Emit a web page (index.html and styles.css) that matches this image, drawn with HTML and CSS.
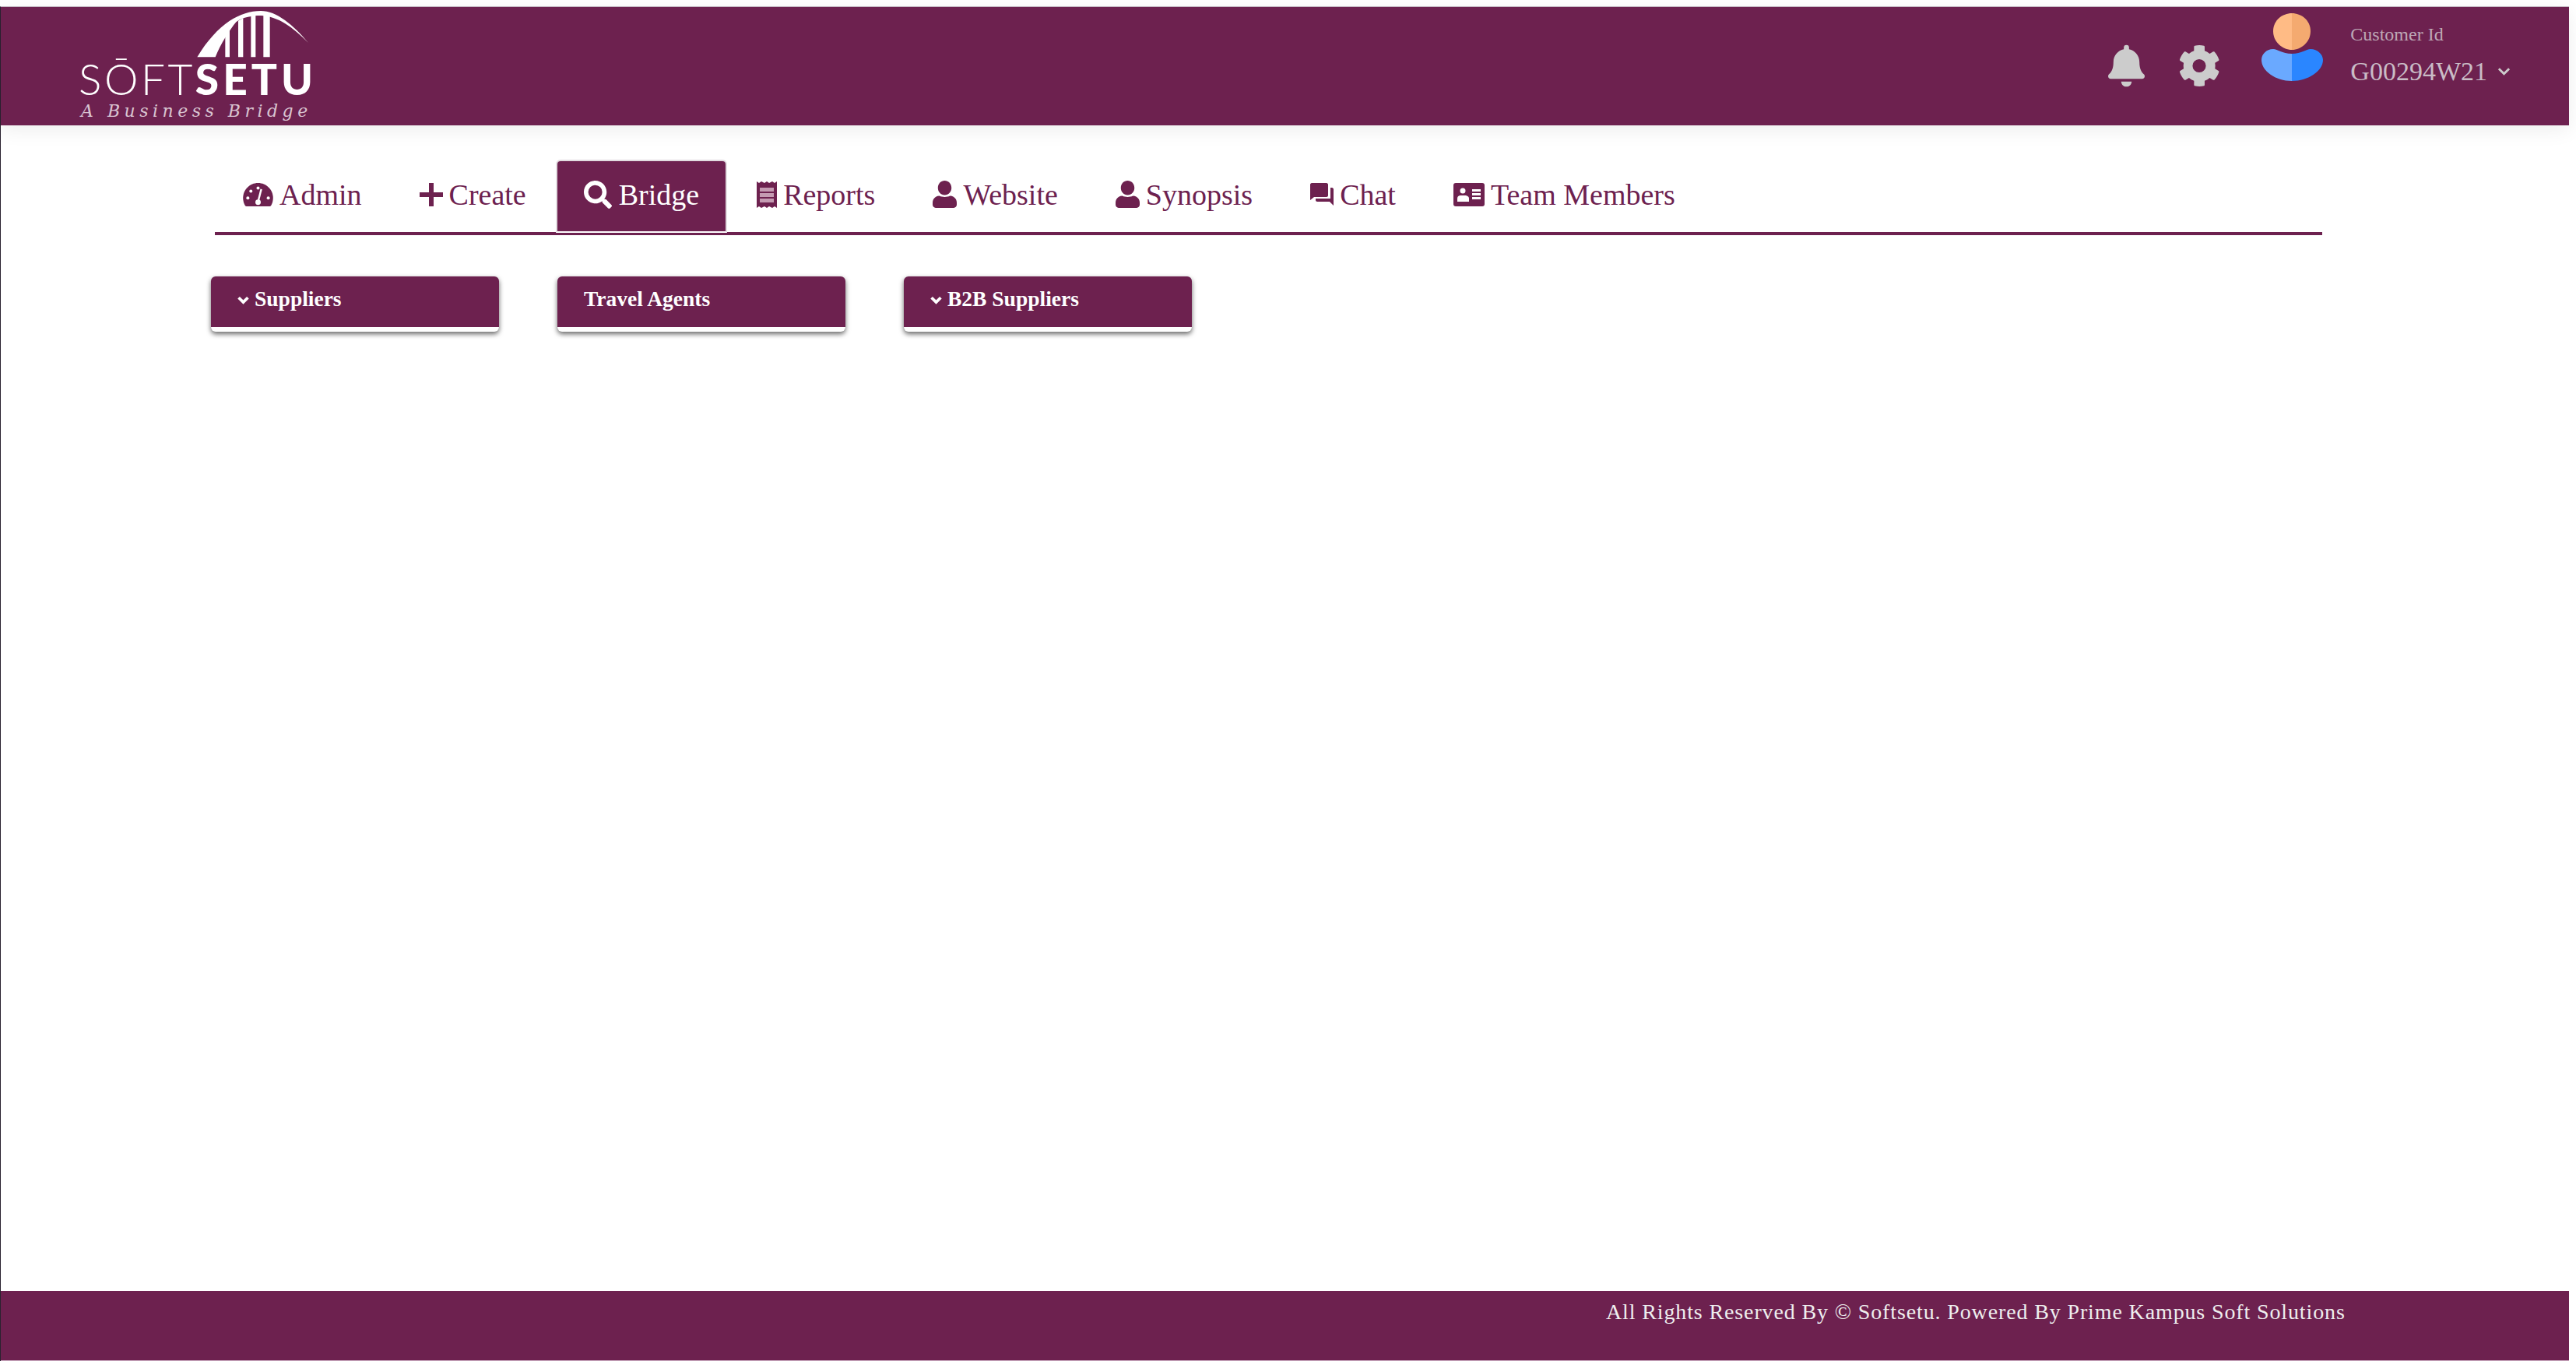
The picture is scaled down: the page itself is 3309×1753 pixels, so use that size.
FILE: index.html
```html
<!DOCTYPE html>
<html lang="en">
<head>
    <meta charset="UTF-8">
    <meta name="viewport" content="width=device-width, initial-scale=1.0">
    <title>Softsetu - Bridge</title>
    <link rel="stylesheet" href="styles.css">
</head>
<body>
    <div class="page">
        <header class="topbar">
            <div class="logo">
                <svg class="logo-arc" viewBox="0 0 510 210">
                    <path fill="#fff" d="M40 190 C75 130 120 80 165 50 C205 25 245 12 285 12 C345 12 410 65 468 135 C410 75 350 32 285 30 C255 30 215 35 190 55 C165 85 130 140 110 190 Z"/>
                    <path fill="#fff" d="M148 190 H165 V75 L148 95 Z M198 190 H217 V40 L198 50 Z M247 190 H265 V30 H247 Z M295 190 H320 V25 H295 Z"/>
                </svg>
                <div class="logo-name"><span class="logo-thin">SŌFT</span><span class="logo-bold">SETU</span></div>
                <div class="logo-tag">A Business Bridge</div>
            </div>
            <div class="top-right">
                <svg class="top-icon bell" viewBox="0 0 448 512"><path fill="#ccc" d="M224 512c35 0 64-29 64-64H160c0 35 29 64 64 64zm215-150c-19-21-56-52-56-154 0-78-54-140-127-155V32a32 32 0 0 0-64 0v21C119 68 65 130 65 208c0 102-37 133-56 154-6 6-9 14-9 22 0 16 13 32 32 32h384c19 0 32-16 32-32 0-8-3-16-9-22z"/></svg>
                <svg class="top-icon gear" viewBox="0 0 512 512"><path fill="#ccc" fill-rule="evenodd" d="M487 316l-42-25c4-23 4-47 0-70l42-25c5-3 7-9 5-14-11-35-30-67-54-93-4-4-10-5-15-2l-42 24c-18-15-38-27-60-35V28c0-6-4-11-9-12-36-8-74-8-109 0-5 1-9 6-9 12v48c-22 8-42 20-60 35L92 87c-5-3-11-2-15 2-24 26-43 58-54 93-2 5 0 11 5 14l42 25c-4 23-4 47 0 70l-42 25c-5 3-7 9-5 14 11 35 30 67 54 93 4 4 10 5 15 2l42-24c18 15 38 27 60 35v48c0 6 4 11 9 12 36 8 74 8 109 0 5-1 9-6 9-12v-48c22-8 42-20 60-35l42 24c5 3 11 2 15-2 24-26 43-58 54-93 2-5 0-11-5-14zM256 336a80 80 0 1 1 0-160 80 80 0 0 1 0 160z"/></svg>
                <svg class="avatar" viewBox="0 0 80 87">
                    <path d="M39 0 C27 0 15 9 15 23 C15 37 27 47 39 47 Z" fill="#ffbb85"/>
                    <path d="M39 0 C51 0 63 9 63 23 C63 37 51 47 39 47 Z" fill="#f4aa70"/>
                    <path d="M39 87 C18 87 0 74 0 60 C0 53 6 46 15 46 C21 46 26 52 39 52 Z" fill="#6aa9ff"/>
                    <path d="M39 87 C60 87 79 74 79 60 C79 53 72 46 63 46 C57 46 52 52 39 52 Z" fill="#2a86ff"/>
                </svg>
                <div class="customer">
                    <div class="customer-label">Customer Id</div>
                    <div class="customer-id">G00294W21
                        <svg class="customer-caret" viewBox="0 0 18 12"><path d="M2 2 L9 9 L16 2" fill="none" stroke="#ccc" stroke-width="3"/></svg>
                    </div>
                </div>
            </div>
        </header>

        <main class="content">
            <nav class="tabs">
                <a class="tab" href="#">
                    <svg class="tab-icon gauge" viewBox="0 32 576 448">
                        <path fill="currentColor" d="M288 32C129 32 0 161 0 320c0 53 14 103 39 146 6 9 16 14 27 14h444c11 0 21-5 27-14 25-43 39-93 39-146 0-159-129-288-288-288z"/>
                        <g fill="#fff"><circle cx="288" cy="128" r="30"/><circle cx="150" cy="190" r="30"/><circle cx="92" cy="320" r="30"/><circle cx="484" cy="320" r="30"/><circle cx="288" cy="400" r="52"/></g>
                        <path d="M350 150 L288 390" stroke="#fff" stroke-width="36"/>
                    </svg>
                    Admin
                </a>
                <a class="tab" href="#">
                    <svg class="tab-icon plus" viewBox="0 0 30 30"><path fill="currentColor" d="M12 0h6v12h12v6H18v12h-6V18H0v-6h12z"/></svg>
                    Create
                </a>
                <a class="tab active" href="#">
                    <svg class="tab-icon search" viewBox="0 0 512 512"><path fill="currentColor" fill-rule="evenodd" d="M505 443L405 343c-4-4-10-7-17-7h-16c28-35 44-80 44-128C416 93 323 0 208 0S0 93 0 208s93 208 208 208c48 0 93-16 128-44v16c0 7 3 13 7 17l100 100c9 9 24 9 34 0l28-28c9-10 9-25 0-34zM208 336a128 128 0 1 1 0-256 128 128 0 0 1 0 256z"/></svg>
                    Bridge
                </a>
                <a class="tab" href="#">
                    <svg class="tab-icon receipt" viewBox="0 0 26 34"><path fill="currentColor" d="M0 0l3 2 3-2 4 2 3-2 3 2 4-2 3 2 3-2v34l-3-2-3 2-4-2-3 2-3-2-4 2-3-2-3 2z"/><path fill="#c49bb2" d="M4 8h18v5H4zM4 15h18v5H4zM4 22h18v5H4z"/></svg>
                    Reports
                </a>
                <a class="tab" href="#">
                    <svg class="tab-icon person" viewBox="0 0 32 36"><path fill="currentColor" d="M16 0c5 0 9 4 9 9.500S21 19 16 19 7 15 7 9.500 11 0 16 0zM9 20c4 2 10 2 14 0 5 0 9 4 9 9v3c0 2-2 4-4 4H4c-2 0-4-2-4-4v-3c0-5 4-9 9-9z"/></svg>
                    Website
                </a>
                <a class="tab" href="#">
                    <svg class="tab-icon person" viewBox="0 0 32 36"><path fill="currentColor" d="M16 0c5 0 9 4 9 9.500S21 19 16 19 7 15 7 9.500 11 0 16 0zM9 20c4 2 10 2 14 0 5 0 9 4 9 9v3c0 2-2 4-4 4H4c-2 0-4-2-4-4v-3c0-5 4-9 9-9z"/></svg>
                    Synopsis
                </a>
                <a class="tab" href="#">
                    <svg class="tab-icon chat" viewBox="0 0 30 29"><path fill="currentColor" d="M2 0h19c1 0 2 1 2 2v14c0 1-1 2-2 2H5l-5 4V2C0 1 1 0 2 0z"/><path fill="currentColor" d="M26 6h2c1 0 2 1 2 2v21l-5-5H9c-1 0-2-1-2-2v-2h19z"/></svg>
                    Chat
                </a>
                <a class="tab" href="#">
                    <svg class="tab-icon idcard" viewBox="0 0 40 30"><rect width="40" height="30" rx="3" fill="currentColor"/><circle cx="12" cy="10" r="3.500" fill="#fff"/><path fill="#fff" d="M5 24v-4c0-3 2-4 4-4h6c2 0 5 1 5 4v4z"/><path fill="#fff" d="M24 8h11v3H24zM24 13h11v3H24zM24 18h11v3H24z"/></svg>
                    Team Members
                </a>
            </nav>

            <div class="cards">
                <div class="card-btn">
                    <svg class="card-caret" viewBox="0 0 14 10"><path d="M1.500 2 L7 7.500 L12.500 2" fill="none" stroke="#fff" stroke-width="3.500"/></svg>
                    Suppliers
                </div>
                <div class="card-btn">Travel Agents</div>
                <div class="card-btn">
                    <svg class="card-caret" viewBox="0 0 14 10"><path d="M1.500 2 L7 7.500 L12.500 2" fill="none" stroke="#fff" stroke-width="3.500"/></svg>
                    B2B Suppliers
                </div>
            </div>
        </main>

        <footer class="footer">All Rights Reserved By © Softsetu. Powered By Prime Kampus Soft Solutions</footer>
    </div>
</body>
</html>
```
FILE: styles.css
```css
* {
    box-sizing: border-box;
}
body {
    margin: 0;
    background: #fff;
    font-family: "Liberation Serif", "DejaVu Serif", serif;
    color: #6d214f;
}
.page {
    display: flex;
    flex-direction: column;
    width: 3300px;
    height: 1740px;
    margin-top: 8px;
    border-top: 1px solid #c8bcc6;
    border-left: 1px solid #2a2230;
}
.topbar {
    display: flex;
    justify-content: space-between;
    height: 152px;
    padding-left: 103px;
    background: #6d214f;
    box-shadow: 0 6px 24px rgba(0, 0, 0, 0.07);
}
.logo {
    width: 300px;
    position: relative;
    color: #fff;
}
.logo-arc {
    position: absolute;
    left: 136px;
    top: 1px;
    width: 170px;
    height: 70px;
}
.logo-name {
    position: absolute;
    top: 60px;
    left: -3px;
    display: flex;
    font-family: "Lato", "Liberation Sans", sans-serif;
    font-size: 55px;
    line-height: 64px;
    white-space: nowrap;
}
.logo-thin {
    font-weight: 300;
    letter-spacing: 3.5px;
}
.logo-bold {
    font-weight: 900;
    letter-spacing: 5px;
}
.logo-tag {
    position: absolute;
    top: 122px;
    left: 0;
    font-family: "DejaVu Serif", serif;
    font-style: italic;
    font-size: 22px;
    line-height: 24px;
    letter-spacing: 5.5px;
    white-space: nowrap;
    color: #d9c4d1;
}
.top-right {
    display: flex;
    padding-right: 75px;
}
.top-icon {
    margin-top: 48px;
    height: 55px;
}
.bell {
    width: 47px;
    margin-right: 42px;
}
.gear {
    width: 56px;
    margin-right: 52px;
}
.avatar {
    width: 80px;
    height: 87px;
    margin-top: 8px;
    margin-right: 34px;
}
.customer {
    color: #c9bcc6;
    padding-top: 20px;
}
.customer-label {
    font-size: 24px;
    line-height: 30px;
    color: #bda8b6;
}
.customer-id {
    display: flex;
    align-items: center;
    gap: 13px;
    margin-top: 8px;
    font-size: 34px;
    line-height: 50px;
}
.customer-caret {
    width: 17px;
    height: 12px;
}
.content {
    flex: 1;
    padding: 44px 0 0 270px;
}
.tabs {
    display: flex;
    gap: 2px;
    width: 2707px;
    height: 97px;
    margin-left: 5px;
    border-bottom: 4px solid #6d214f;
}
.tab {
    display: flex;
    align-items: center;
    gap: 8px;
    height: 93px;
    padding: 0 36px 4px;
    font-size: 38px;
    color: #6d214f;
    text-decoration: none;
}
.tab.active {
    height: 94px;
    padding: 0 34px 4px;
    gap: 9px;
    background: #6d214f;
    color: #fff;
    border: 2px solid #e2dce0;
    border-bottom-color: #fff;
    border-radius: 6px 6px 0 0;
}
.gauge {
    width: 39px;
    height: 30px;
}
.plus {
    width: 30px;
    height: 30px;
}
.search {
    width: 36px;
    height: 36px;
}
.receipt {
    width: 26px;
    height: 34px;
}
.person {
    width: 31px;
    height: 35px;
}
.chat {
    width: 30px;
    height: 29px;
}
.idcard {
    width: 40px;
    height: 30px;
}
.cards {
    display: flex;
    gap: 75px;
    margin-top: 53px;
}
.card-btn {
    display: flex;
    align-items: flex-start;
    gap: 7px;
    width: 370px;
    height: 71px;
    padding: 5px 34px;
    background: #6d214f;
    border-bottom: 6px solid #fff;
    border-radius: 6px;
    box-shadow: 0 3px 6px rgba(0, 0, 0, 0.6);
    color: #fff;
    font-size: 27.500px;
    font-weight: bold;
    line-height: 48px;
}
.card-caret {
    width: 15px;
    height: 11px;
    margin-top: 20px;
}
.footer {
    height: 90px;
    padding: 5px 0 0 2062px;
    background: #6d214f;
    color: #eee;
    font-size: 28px;
    letter-spacing: 0.870px;
    line-height: 44px;
    white-space: nowrap;
    border-bottom: 1px solid #dcc4d6;
}
```
